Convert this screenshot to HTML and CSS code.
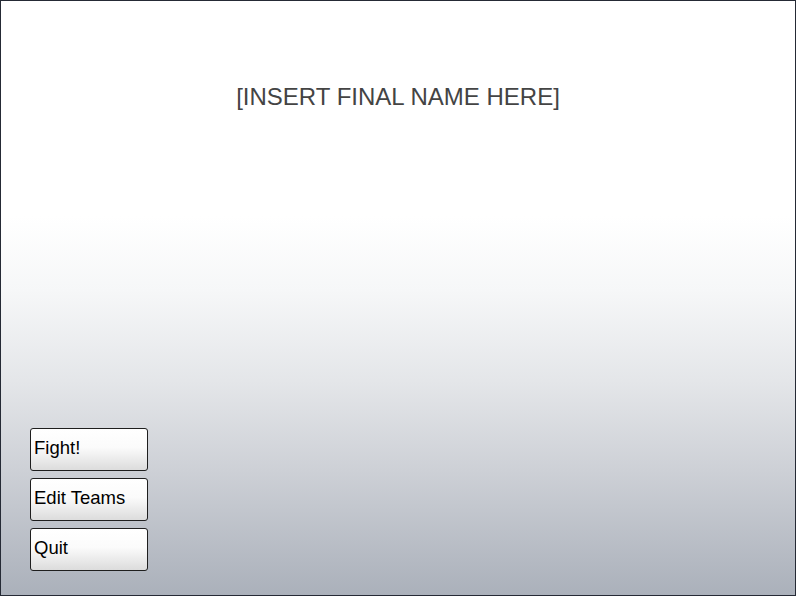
FILE: index.html
```html
<!DOCTYPE html>
<html>
<head>
<meta charset="utf-8">
<link rel="stylesheet" href="styles.css">
</head>
<body>
<div class="screen">
  <h1 class="title">[INSERT FINAL NAME HERE]</h1>
  <div class="menu">
    <button class="btn">Fight!</button>
    <button class="btn">Edit Teams</button>
    <button class="btn">Quit</button>
  </div>
</div>
</body>
</html>
```

FILE: styles.css
```css
html, body {
  margin: 0;
  padding: 0;
}
.screen {
  box-sizing: border-box;
  width: 796px;
  height: 596px;
  border: 1px solid #252a35;
  background: linear-gradient(to bottom, #ffffff 0px, #ffffff 215px, #f6f7f8 290px, #e4e6e9 380px, #cdd0d6 470px, #aab0ba 596px);
  display: flex;
  flex-direction: column;
  font-family: "Liberation Sans", Arial, sans-serif;
}
.title {
  margin: 82px 0 0 0;
  text-align: center;
  font-weight: normal;
  font-size: 24px;
  line-height: 28px;
  color: #444444;
}
.menu {
  margin-top: auto;
  margin-bottom: 24px;
  margin-left: 29px;
  display: flex;
  flex-direction: column;
  gap: 7px;
}
.btn {
  box-sizing: border-box;
  width: 118px;
  height: 43px;
  border: 1px solid #1e1e1e;
  border-radius: 3px;
  background: linear-gradient(to bottom, #ffffff 0%, #fbfbfb 45%, #dcdcdc 100%);
  font-family: "Liberation Sans", Arial, sans-serif;
  font-size: 18.5px;
  color: #000;
  text-align: left;
  padding: 0 0 4px 3px;
  margin: 0;
}
```
